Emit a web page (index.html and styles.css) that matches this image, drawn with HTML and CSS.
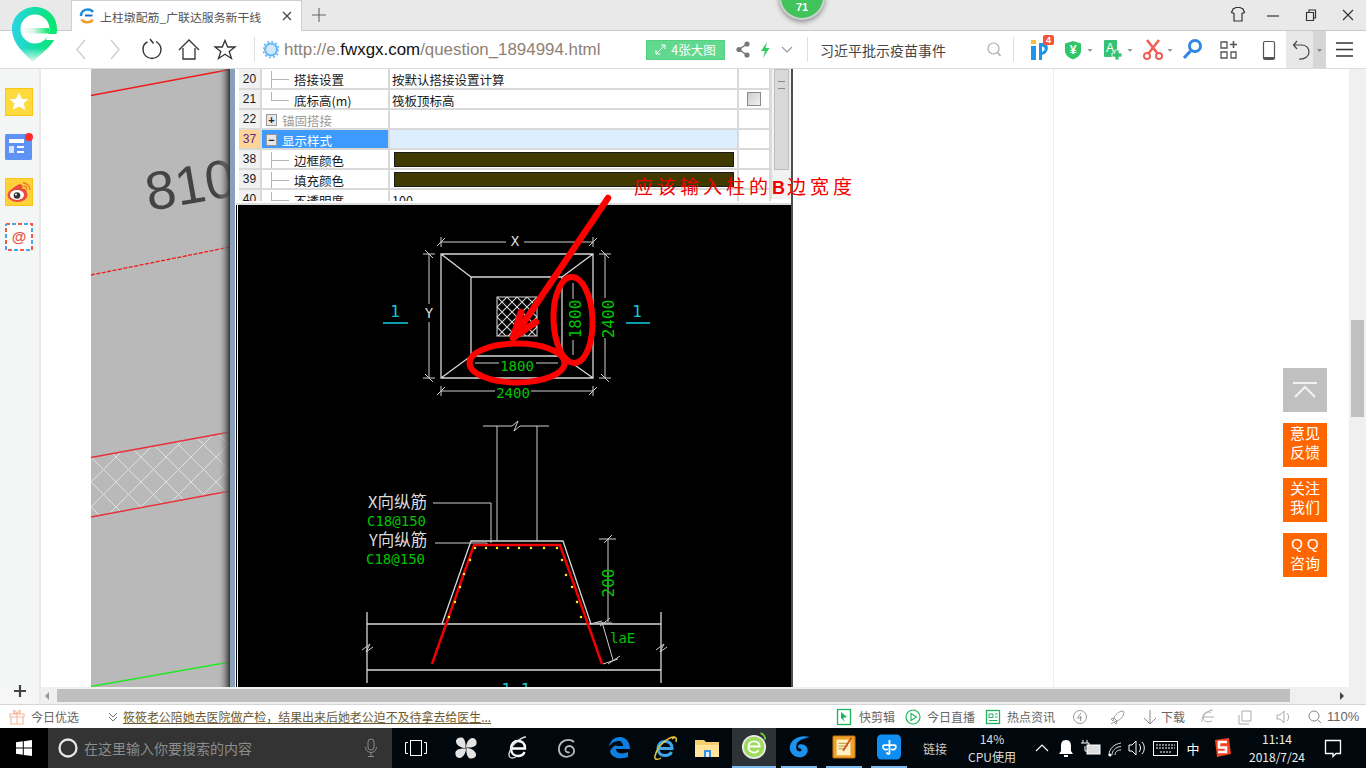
FILE: index.html
```html
<!DOCTYPE html>
<html lang="zh-CN">
<head>
<meta charset="utf-8">
<title>上柱墩配筋_广联达服务新干线</title>
<link rel="stylesheet" href="styles.css">
</head>
<body>
<div class="app">
  <svg class="logo" width="50" height="58" viewBox="0 0 50 58" aria-hidden="true">
    <defs>
      <linearGradient id="lg" x1="0" y1="0" x2="1" y2="0"><stop offset="0" stop-color="#2ad4e4"/><stop offset="0.55" stop-color="#14dfa0"/><stop offset="1" stop-color="#06e86a"/></linearGradient>
      <linearGradient id="lbar" x1="0" y1="0" x2="1" y2="0"><stop offset="0" stop-color="#ffffff"/><stop offset="0.45" stop-color="#d8f5e6"/><stop offset="1" stop-color="#06e86a"/></linearGradient>
      <linearGradient id="lfade" x1="0" y1="0" x2="0" y2="1"><stop offset="0" stop-color="#fff" stop-opacity="0"/><stop offset="1" stop-color="#fff"/></linearGradient>
    </defs>
    <path d="M25 1C38 1 47 11 47 23C47 38 34 44 23 56C16 49 2 38 2 23C2 11 12 1 25 1Z" fill="url(#lg)"/>
    <rect x="0" y="42" width="50" height="16" fill="url(#lfade)"/>
    <circle cx="25" cy="23" r="14.500" fill="#fff"/>
    <path d="M11 22H39V27.500H11Z" fill="url(#lbar)"/>
    <path d="M25 13C31 13 36 17 37.500 22H32C31 19 28 18 25 18C22 18 19 19 18 22H12.500C14 17 19 13 25 13Z" fill="#fff"/>
    <path d="M38 28H47.500L45 34L36 34Z" fill="#fff"/>
  </svg>
  <div class="score"><span class="score-num">71</span></div>

  <header class="tabstrip">
    <div class="tab">
      <svg width="16" height="16" viewBox="0 0 16 16" aria-hidden="true"><path d="M2 8C2 4 5 1.500 9 1.500C11 1.500 13 2.500 14 4" fill="none" stroke="#1f8fe0" stroke-width="2.600"/><path d="M6 7.500H13.500" stroke="#1f6fc0" stroke-width="2"/><path d="M2.500 11.500C4 14.500 10 15.500 14 12" fill="none" stroke="#f09a22" stroke-width="2.600"/></svg>
      <span class="tab-title">上柱墩配筋_广联达服务新干线</span>
      <svg class="tab-close" width="10" height="10" viewBox="0 0 10 10" aria-hidden="true"><path d="M1 1L9 9M9 1L1 9" stroke="#444" stroke-width="1.200"/></svg>
    </div>
    <svg class="tab-plus" width="14" height="14" viewBox="0 0 14 14" aria-hidden="true"><path d="M7 0V14M0 7H14" stroke="#666" stroke-width="1.100"/></svg>
    <div class="grow"></div>
    <svg width="36" height="30" viewBox="-2 0 36 30" aria-hidden="true"><path d="M13 9L16 7.500H20L23 9L24.500 12.500L22 13.500V21H14V13.500L11.500 12.500Z" fill="none" stroke="#333" stroke-width="1.200"/></svg>
    <svg width="36" height="30" viewBox="-1 0 36 30" aria-hidden="true"><path d="M12 16H24" stroke="#333" stroke-width="1.200"/></svg>
    <svg width="38" height="30" viewBox="-2 0 38 30" aria-hidden="true"><path d="M14.500 12.500H21.500V20.500H14.500ZM17 12.500V10H23.500V18H21.500" fill="none" stroke="#333" stroke-width="1.200"/></svg>
    <svg width="38" height="30" viewBox="-1 0 38 30" aria-hidden="true"><path d="M14 10L24 20M24 10L14 20" stroke="#333" stroke-width="1.200"/></svg>
  </header>

  <nav class="navbar">
    <svg width="34" height="37" viewBox="0 0 34 37" aria-hidden="true"><path d="M21 9L13 18.500L21 28" fill="none" stroke="#ccc" stroke-width="1.300"/></svg>
    <svg width="34" height="37" viewBox="0 0 34 37" aria-hidden="true"><path d="M13 9L21 18.500L13 28" fill="none" stroke="#ccc" stroke-width="1.300"/></svg>
    <svg width="40" height="37" viewBox="0 0 40 37" aria-hidden="true"><path d="M15.500 11C12 12.500 11 16 11 18.500C11 23.500 15 27.500 20 27.500C25 27.500 29 23.500 29 18.500C29 15.500 27.500 12.500 24 10.500M18 8L21.500 12.500" fill="none" stroke="#333" stroke-width="1.400"/></svg>
    <svg width="34" height="37" viewBox="0 0 34 37" aria-hidden="true"><path d="M7 19L17 9L27 19M11 17V28H23V17" fill="none" stroke="#333" stroke-width="1.300"/></svg>
    <svg width="38" height="37" viewBox="0 0 38 37" aria-hidden="true"><path d="M19 9.500L21.700 16H29L23.200 20.400L25.500 27.500L19 23.300L12.500 27.500L14.800 20.400L9 16H16.300Z" fill="none" stroke="#333" stroke-width="1.300"/></svg>
    <span class="vsep sep-url"></span>
    <svg class="url-icon" width="16" height="37" viewBox="0 0 16 37" aria-hidden="true"><circle cx="8" cy="18.500" r="6" fill="#cfe9fb" stroke="#66b7ee" stroke-width="2"/><circle cx="8" cy="18.500" r="8" fill="none" stroke="#66b7ee" stroke-width="1.500" stroke-dasharray="2 2.200"/></svg>
    <div class="url">http://e.<b class="domain">fwxgx.com</b>/question_1894994.html</div>
    <div class="bigpic">
      <svg width="11" height="11" viewBox="0 0 11 11" aria-hidden="true"><path d="M1 10L10 1M6 1H10V5M1 6V10H5" fill="none" stroke="#fff" stroke-width="1"/></svg>
      <span>4张大图</span>
    </div>
    <svg class="share" width="20" height="37" viewBox="0 0 20 37" aria-hidden="true"><path d="M14 13L6 18.500L14 24" fill="none" stroke="#777" stroke-width="1.500"/><circle cx="14" cy="13" r="2.600" fill="#777"/><circle cx="6" cy="18.500" r="2.600" fill="#777"/><circle cx="14" cy="24" r="2.600" fill="#777"/></svg>
    <svg width="24" height="37" viewBox="0 0 24 37" aria-hidden="true"><path d="M14 11L8 20H12L10 27L16.500 17H12.500Z" fill="#2ecb62"/></svg>
    <svg width="20" height="37" viewBox="0 0 20 37" aria-hidden="true"><path d="M5 16L10 21L15 16" fill="none" stroke="#999" stroke-width="1.200"/></svg>
    <span class="vsep sep-search"></span>
    <div class="searchbox">习近平批示疫苗事件</div>
    <svg width="20" height="37" viewBox="0 0 20 37" aria-hidden="true"><circle cx="9.500" cy="17.500" r="5.500" fill="none" stroke="#aaa" stroke-width="1.200"/><path d="M13.500 21.500L16.500 25" stroke="#aaa" stroke-width="1.300"/></svg>
    <span class="vsep sep-tools"></span>
    <svg class="first-tool" width="30" height="37" viewBox="0 0 30 37" aria-hidden="true"><rect x="5" y="9" width="5" height="4" fill="#f2c230"/><rect x="5" y="15" width="5" height="14" fill="#1c96e8"/><path d="M13 12H18C23 12 24 22 16 24V29H13Z" fill="#1c96e8"/><path d="M16 15.500C19 15.500 20 19.500 16 21Z" fill="#fff"/><rect x="17" y="4" width="11" height="10" rx="2" fill="#f2553d"/><text class="mini-badge" x="22.500" y="12">4</text></svg>
    <svg width="40" height="37" viewBox="0 0 40 37" aria-hidden="true"><path d="M17 10L25 12.500V20C25 24 21 27 17 28.500C13 27 9 24 9 20V12.500Z" fill="#2fc66a"/><text class="shield-text" x="17" y="23">¥</text><path d="M31.500 18H36.500L34 21Z" fill="#999"/></svg>
    <svg width="40" height="37" viewBox="0 0 40 37" aria-hidden="true"><rect x="8" y="9" width="13" height="17" rx="1" fill="#35c273"/><text class="a-text" x="14" y="21">A</text><path d="M19 19H23V22H26V26H23V29H19V26H16V22H19Z" fill="#35c273" stroke="#fff" stroke-width="0.800"/><path d="M31.500 18H36.500L34 21Z" fill="#999"/></svg>
    <svg width="40" height="37" viewBox="0 0 40 37" aria-hidden="true"><path d="M11 9L22 23M23 9L12 23" stroke="#f0605a" stroke-width="2.600"/><circle cx="11" cy="25" r="3" fill="none" stroke="#f0605a" stroke-width="2"/><circle cx="23" cy="25" r="3" fill="none" stroke="#f0605a" stroke-width="2"/><path d="M31.500 18H36.500L34 21Z" fill="#999"/></svg>
    <svg width="32" height="37" viewBox="0 0 32 37" aria-hidden="true"><circle cx="19" cy="15" r="5.500" fill="#fff" stroke="#2f86e6" stroke-width="3"/><path d="M14.500 20L8 27" stroke="#2f86e6" stroke-width="3.200"/></svg>
    <svg width="40" height="37" viewBox="0 0 40 37" aria-hidden="true"><path d="M13 11H19V17H13ZM13 21H19V27H13ZM23 21H28V27H23Z" fill="none" stroke="#555" stroke-width="1.300"/><path d="M25.500 10V17M22 13.500H29" stroke="#555" stroke-width="1.600"/></svg>
    <svg width="38" height="37" viewBox="0 0 38 37" aria-hidden="true"><rect x="15.500" y="10.500" width="11" height="18" rx="1.500" fill="none" stroke="#555" stroke-width="1.200"/><path d="M16 26H26V28H16Z" fill="#555"/></svg>
    <div class="undo">
      <svg width="27" height="37" viewBox="0 0 27 37" aria-hidden="true"><path d="M8 14H16C21 14 23 18 23 21C23 25 19 28.500 13 28M11 10L7.500 14L11 18" fill="none" stroke="#444" stroke-width="1.200"/></svg>
      <div class="undo-more"><svg width="13" height="37" viewBox="0 0 13 37" aria-hidden="true"><path d="M4 18H9L6.500 21Z" fill="#888"/></svg></div>
    </div>
    <svg width="40" height="37" viewBox="0 0 40 37" aria-hidden="true"><path d="M10 12H27M10 18.500H27M10 25H27" stroke="#333" stroke-width="1.300"/></svg>
  </nav>

  <main class="main">
    <aside class="sidebar">
      <svg width="28" height="28" viewBox="0 0 28 28" aria-hidden="true"><rect x="0.500" y="0.500" width="27" height="27" fill="#ffda3d" stroke="#fcc419"/><path d="M14 4.500L17 11H23.500L18.500 15.500L20.500 22L14 18.500L7.500 22L9.500 15.500L4.500 11H11Z" fill="#fff"/></svg>
      <svg width="28" height="28" viewBox="0 0 28 28" aria-hidden="true"><rect x="0" y="1" width="27" height="26" rx="1.500" fill="#5f92f5"/><rect x="4" y="6" width="15" height="4" fill="#fff"/><rect x="4" y="13" width="5" height="7" fill="#d7e5ff"/><path d="M12 13H19V15H12ZM12 18H19V20H12Z" fill="#fff"/><circle cx="24" cy="4" r="4" fill="#ff2a2a"/></svg>
      <svg width="28" height="28" viewBox="0 0 28 28" aria-hidden="true"><rect x="0.500" y="0.500" width="27" height="27" fill="#ffd23a" stroke="#fcc419"/><ellipse cx="12.500" cy="17" rx="10" ry="7" fill="#ea4d3d"/><path d="M6 12C10 8 15 5 17 7C18 8 17 11 17 11C20 10 22 12 22 15L14 12Z" fill="#ea4d3d"/><ellipse cx="12" cy="17" rx="7" ry="5" fill="#fff"/><circle cx="12" cy="17.500" r="3.300" fill="#333"/><circle cx="11" cy="16.500" r="1" fill="#fff"/><path d="M18 5C22 5 25 8 25 12M18.500 8C20.500 8 22 9.500 22 11.500" fill="none" stroke="#ef7b33" stroke-width="1.400"/></svg>
      <svg width="28" height="28" viewBox="0 0 28 28" aria-hidden="true"><rect x="1" y="1" width="26" height="26" fill="#fff" stroke="#ef5a4a" stroke-width="2" stroke-dasharray="4 8"/><rect x="1" y="1" width="26" height="26" fill="none" stroke="#46a6ef" stroke-width="2" stroke-dasharray="4 8" stroke-dashoffset="6"/><text class="at" x="14" y="19">@</text></svg>
      <svg class="side-add" width="12" height="12" viewBox="0 0 12 12" aria-hidden="true"><path d="M6 0V12M0 6H12" stroke="#444" stroke-width="2.200"/></svg>
    </aside>

    <section class="page">
      <div class="picture">
        <svg class="drawing" width="139" height="618" viewBox="91 69 139 618" role="img" aria-label="图纸局部">
          <defs>
            <pattern id="lattice" width="25" height="25" patternUnits="userSpaceOnUse" patternTransform="translate(91 457)"><path d="M0 0L25 25M25 0L0 25" stroke="#dfdfdf" stroke-width="1"/></pattern>
            <linearGradient id="edge" x1="0" x2="1"><stop offset="0" stop-color="#b9b9b9" stop-opacity="0"/><stop offset="1" stop-color="#333"/></linearGradient>
            <clipPath id="band"><path d="M91 457L230 432V491L91 517Z"/></clipPath>
          </defs>
          <rect x="91" y="69" width="139" height="618" fill="#b9b9b9"/>
          <rect x="91" y="432" width="139" height="85" fill="url(#lattice)" clip-path="url(#band)"/>
          <path d="M91 95.500L230 69.500" stroke="#f01a1a" stroke-width="1.500"/>
          <path d="M91 275L230 247" stroke="#f01a1a" stroke-width="1.300" stroke-dasharray="4 1.500"/>
          <path d="M91 457.500L230 432M91 517L230 491" stroke="#e8303a" stroke-width="1.400"/>
          <path d="M91 686.500L230 662" stroke="#22e822" stroke-width="1.400"/>
          <text class="dim810" transform="translate(149 211) rotate(-10)">810</text>
          <rect x="218" y="69" width="12" height="618" fill="url(#edge)"/>
        </svg>
        <div class="dialog">
          <div class="frame"></div>
          <div class="dialog-main">
            <div class="props">
              <div class="grid">
                <div class="row">
                  <div class="num">20</div>
                  <div class="name"><i class="branch"></i>搭接设置</div>
                  <div class="val">按默认搭接设置计算</div>
                  <div class="opt"></div>
                </div>
                <div class="row">
                  <div class="num">21</div>
                  <div class="name"><i class="branch branch-end"></i>底标高(m)</div>
                  <div class="val">筏板顶标高</div>
                  <div class="opt"><i class="check"></i></div>
                </div>
                <div class="row">
                  <div class="num">22</div>
                  <div class="name muted"><i class="toggle">+</i>锚固搭接</div>
                  <div class="val"></div>
                  <div class="opt"></div>
                </div>
                <div class="row row-active">
                  <div class="num">37</div>
                  <div class="name"><i class="toggle">−</i>显示样式</div>
                  <div class="val"></div>
                  <div class="opt"></div>
                </div>
                <div class="row">
                  <div class="num">38</div>
                  <div class="name"><i class="branch"></i>边框颜色</div>
                  <div class="val"><i class="swatch"></i></div>
                  <div class="opt"></div>
                </div>
                <div class="row">
                  <div class="num">39</div>
                  <div class="name"><i class="branch"></i>填充颜色</div>
                  <div class="val"><i class="swatch"></i></div>
                  <div class="opt"></div>
                </div>
                <div class="row">
                  <div class="num">40</div>
                  <div class="name"><i class="branch"></i>不透明度</div>
                  <div class="val">100</div>
                  <div class="opt"></div>
                </div>
              </div>
              <div class="tbl-scroll"><div class="tbl-thumb"><i class="grip"></i></div></div>
            </div>
            <svg class="cad" width="555" height="482" viewBox="236 205 555 482" role="img" aria-label="柱墩配筋图">
              <defs>
                <pattern id="xhatch" width="10" height="10" patternUnits="userSpaceOnUse" patternTransform="translate(497 297)"><path d="M0 0L10 10M10 0L0 10" stroke="#d8d8d8" stroke-width="1.100"/></pattern>
              </defs>
              <rect x="236" y="205" width="555" height="482" fill="#000"/>
              <rect x="237" y="205" width="1" height="482" fill="#fff"/>
              <path class="cad-line" d="M441 254H593V378H441ZM471 277H562V356H471ZM441 254L471 277M593 254L562 277M441 378L471 356M593 378L562 356"/>
              <rect x="497" y="297" width="40" height="39" fill="url(#xhatch)" stroke="#ddd"/>
              <path class="cad-thin" d="M441 242H506M524 242H593M441 237V247M593 237V247M437 246L445 238M589 246L597 238"/>
              <path class="cad-thin" d="M429 254V304M429 322V378M423 254H435M423 378H435M425 250L433 258M425 374L433 382"/>
              <path class="cad-thin" d="M605 254V298M605 338V378M599 254H611M599 378H611M601 250L609 258M601 374L609 382"/>
              <path class="cad-thin" d="M573 283V299M573 340V355M475 363H499M536 363H558"/>
              <path class="cad-thin" d="M441 391H495M531 391H593M441 386V396M593 386V396M437 395L445 387M589 395L597 387"/>
              <text class="cad-white" x="515" y="246" text-anchor="middle">X</text>
              <text class="cad-white" x="429" y="318" text-anchor="middle">Y</text>
              <text class="cad-green" x="517" y="371" text-anchor="middle">1800</text>
              <text class="cad-green" x="513" y="398" text-anchor="middle">2400</text>
              <text class="cad-green-v" transform="translate(581 319) rotate(-90)" text-anchor="middle">1800</text>
              <text class="cad-green-v" transform="translate(614 319) rotate(-90)" text-anchor="middle">2400</text>
              <text class="cad-cyan" x="395" y="317" text-anchor="middle">1</text>
              <text class="cad-cyan" x="637" y="317" text-anchor="middle">1</text>
              <path class="cad-cyan-line" d="M383 323H408M626 323H650"/>

              <path class="cad-thin" d="M483 426H512L518 421L514 431L520 426H549M497 426V541M537 426V541"/>
              <path class="cad-line" d="M442 624L471 541H563L591 624"/>
              <path class="cad-line" d="M367 624H661M367 670H661M367 612V683M661 612V683"/>
              <path class="cad-thin" d="M362 650L370 644L366 652L373 647M656 650L664 644L660 652L667 647"/>
              <path class="cad-thin" d="M433 503H491V543M435 543H487V546"/>
              <path class="rebar" d="M432 664L474 545H560L602 664"/>
              <path class="dots" d="M475 548h.01M486 548h.01M497 548h.01M508 548h.01M519 548h.01M531 548h.01M544 548h.01M557 548h.01M470 560h.01M464 574h.01M460 587h.01M455 602h.01M449 617h.01M562 560h.01M566 575h.01M572 587h.01M577 602h.01M581 617h.01"/>
              <path class="cad-thin" d="M608 539V622M599 539H616M604 543L612 535M596 623H612M600 626L610 618"/>
              <path class="cad-thin" d="M602 622L613 660M603 664L618 659M608 664L620 656M590 624L602 621"/>
              <text class="cad-cn" x="368" y="508">X向纵筋</text>
              <text class="cad-cn" x="369" y="546">Y向纵筋</text>
              <text class="cad-green" x="367" y="526">C18@150</text>
              <text class="cad-green" x="366" y="564">C18@150</text>
              <text class="cad-green-v" transform="translate(614 583) rotate(-90)" text-anchor="middle">200</text>
              <text class="cad-green" x="610" y="643">laE</text>
              <text class="cad-cyan" x="516" y="695" text-anchor="middle">1-1</text>
            </svg>
          </div>
        </div>
        <div class="note">应该输入柱的<b class="note-b">B</b>边宽度</div>
        <svg class="markup" width="380" height="230" viewBox="420 180 380 230" aria-hidden="true">
          <ellipse cx="517" cy="363" rx="47.500" ry="19.500" fill="none" stroke="#f00" stroke-width="6"/>
          <ellipse cx="573" cy="320" rx="19.500" ry="43" fill="none" stroke="#f00" stroke-width="6" transform="rotate(-2 573 320)"/>
          <path d="M608 198L516 334M513 338L521 312M513 338L536 322" fill="none" stroke="#f00" stroke-width="6.500" stroke-linecap="round"/>
        </svg>
      </div>
      <div class="sidecol"></div>
    </section>

    <div class="vscroll"><div class="vthumb"></div></div>

    <div class="floatbar">
      <div class="fb fb-top">
        <svg width="24" height="16" viewBox="0 0 24 16" aria-hidden="true"><path d="M0 1H24M2 15L12 5L22 15" fill="none" stroke="#f2f2f2" stroke-width="2"/></svg>
      </div>
      <div class="fb">意见<br>反馈</div>
      <div class="fb">关注<br>我们</div>
      <div class="fb"><span class="qq">Q Q</span><br>咨询</div>
    </div>
  </main>

  <div class="hbar">
    <div class="add"></div>
    <div class="arrow-l"></div>
    <div class="hthumb"></div>
    <div class="grow"></div>
    <div class="arrow-r"></div>
  </div>

  <div class="statusbar">
    <svg class="gift" width="18" height="18" viewBox="0 0 18 18" aria-hidden="true"><path d="M2 6H16V9H2ZM3 9H15V16H3ZM9 6V16M9 6C6 6 4.500 3 6 2.500C7.500 2 9 6 9 6C9 6 10.500 2 12 2.500C13.500 3 12 6 9 6" fill="none" stroke="#f7b79a" stroke-width="1.100"/></svg>
    <span class="st-text today">今日优选</span>
    <svg class="news-chevron" width="12" height="12" viewBox="0 0 12 12" aria-hidden="true"><path d="M2 2L6 6L10 2M2 6L6 10L10 6" fill="none" stroke="#777" stroke-width="1"/></svg>
    <a class="headline">筱筱老公陪她去医院做产检，结果出来后她老公迫不及待拿去给医生...</a>
    <div class="grow"></div>
    <div class="st-group">
      <svg width="16" height="18" viewBox="0 0 16 18" aria-hidden="true"><rect x="1.500" y="1.500" width="13" height="15" fill="none" stroke="#1cb45a" stroke-width="1.300"/><path d="M5 4L11 9L7 10L9 14L5 10Z" fill="#1cb45a"/></svg>
      <span class="st-text">快剪辑</span>
    </div>
    <div class="st-group g-tight">
      <svg width="16" height="18" viewBox="0 0 16 18" aria-hidden="true"><circle cx="8" cy="9" r="7" fill="none" stroke="#1cb45a" stroke-width="1.200"/><path d="M6 5.500L11.500 9L6 12.500Z" fill="none" stroke="#1cb45a" stroke-width="1.100"/></svg>
      <span class="st-text">今日直播</span>
    </div>
    <div class="st-group g-tight">
      <svg width="16" height="18" viewBox="0 0 16 18" aria-hidden="true"><rect x="1.500" y="2.500" width="13" height="13" fill="none" stroke="#1cb45a" stroke-width="1.300"/><path d="M4 6H8V9.500H4ZM10 6H12.500M10 9H12.500M4 12.500H12.500" fill="none" stroke="#1cb45a" stroke-width="1"/></svg>
      <span class="st-text">热点资讯</span>
    </div>
    <div class="st-tools">
      <svg width="30" height="18" viewBox="0 0 30 18" aria-hidden="true"><circle cx="15" cy="9" r="6.500" fill="none" stroke="#999"/><path d="M16 5L12.500 10H17M15.500 8V13" fill="none" stroke="#999"/></svg>
      <svg width="44" height="18" viewBox="0 0 44 18" aria-hidden="true"><path d="M28 3C24 3 20 7 19 10L22 13C25 12 29 8 29 4ZM19 10L16 11L18 13ZM22 13L21 16L19 14ZM19 14L16 16" fill="none" stroke="#999"/></svg>
      <svg width="22" height="18" viewBox="0 0 22 18" aria-hidden="true"><path d="M11 2V16M5 10L11 16L17 10" fill="none" stroke="#888"/></svg>
      <span class="st-text">下载</span>
      <svg width="46" height="18" viewBox="0 0 46 18" aria-hidden="true"><path d="M29 9H18C18 13 22 15 27 13M18 9C18 5 22 3 26 4.500M28 2C23 2 16 8 17 14" fill="none" stroke="#aaa"/></svg>
      <svg width="28" height="18" viewBox="0 0 28 18" aria-hidden="true"><path d="M11 3H20V13H11ZM8 7V16H18" fill="none" stroke="#aaa"/></svg>
      <svg width="48" height="18" viewBox="0 0 48 18" aria-hidden="true"><path d="M18 7H21L25 3V15L21 11H18ZM28 5C30 7 30 11 28 13" fill="none" stroke="#aaa"/></svg>
      <svg width="16" height="18" viewBox="0 0 16 18" aria-hidden="true"><circle cx="7" cy="8" r="5" fill="none" stroke="#888"/><path d="M10.500 11.500L14 15" stroke="#888"/></svg>
      <span class="st-text zoomlevel">110%</span>
    </div>
  </div>

  <footer class="taskbar">
    <div class="start"><svg width="16" height="16" viewBox="0 0 16 16" aria-hidden="true"><path d="M0 2.300L6.800 1.300V7.600H0ZM7.800 1.200L16 0V7.600H7.800ZM0 8.500H6.800V14.800L0 13.800ZM7.800 8.500H16V16L7.800 14.900Z" fill="#fff"/></svg></div>
    <div class="cortana">
      <svg width="20" height="20" viewBox="0 0 20 20" aria-hidden="true"><circle cx="10" cy="10" r="8.500" fill="none" stroke="#e6e6e6" stroke-width="2.300"/></svg>
      <span class="cortana-text">在这里输入你要搜索的内容</span>
      <div class="grow"></div>
      <svg class="mic" width="14" height="20" viewBox="0 0 14 20" aria-hidden="true"><rect x="4" y="1" width="6" height="11" rx="3" fill="none" stroke="#888"/><path d="M1.500 9C1.500 12 4 14.500 7 14.500C10 14.500 12.500 12 12.500 9M7 14.500V18M4 18.500H10" fill="none" stroke="#888"/></svg>
    </div>
    <div class="tb-slot s48"><svg width="22" height="16" viewBox="0 0 22 16" aria-hidden="true"><rect x="5.500" y="0.500" width="11" height="15" fill="none" stroke="#fff"/><path d="M3 2.500H0.500V13.500H3M19 2.500H21.500V13.500H19" fill="none" stroke="#fff"/></svg></div>
    <div class="tb-slot s52"><svg width="22" height="22" viewBox="0 0 22 22" aria-hidden="true"><path d="M10.500 11C7 11 2 9 1 5C0.500 1 5 0 7 0.500C10 1.500 11 7 10.500 11ZM11 10.500C11 7 13 2 17 1C21 0.500 22 5 21.500 7C20.500 10 15 11 11 10.500ZM11.500 11C15 11 20 13 21 17C21.500 21 17 22 15 21.500C12 20.500 11 15 11.500 11ZM11 11.500C11 15 9 20 5 21C1 21.500 0 17 0.500 15C1.500 12 7 11 11 11.500Z" fill="#e4e4e4"/></svg></div>
    <div class="tb-slot s52"><svg width="22" height="24" viewBox="0 0 22 24" aria-hidden="true"><path d="M4 12.500H18C18 7 15 5 11 5C7 5 4 8 4 12.500C4 17 7 20 11 20C14 20 16.500 18.500 17.500 16" fill="none" stroke="#fff" stroke-width="2.400"/><path d="M19 1C15 1 4 8 2 18C1.500 22 5 23 9 21" fill="none" stroke="#ddd" stroke-width="1.300"/></svg></div>
    <div class="tb-slot s46"><svg width="20" height="20" viewBox="0 0 20 20" aria-hidden="true"><path d="M17 4C14 1 8 1 4.500 4.500C1 8 1 14 4.500 17C8 20 14 19 16.500 15.500C18 12 16 8 12.500 8C9.500 8 8 10 8.500 12.500C9 14 11 15 12.500 14" fill="none" stroke="#bbb" stroke-width="1.800"/></svg></div>
    <div class="tb-slot s58"><svg width="22" height="22" viewBox="0 0 22 22" aria-hidden="true"><path d="M1 10C2 4 6 0 12 0C18 0 22 5 22 12H8C8 16 13 18 20 15V20C12 23 3 21 2 14C4 10 7 8 9 8C8 9 8 9 8 9H15C15 6 13 4 11 4C7 4 3 6 1 10Z" fill="#0c7fe0"/></svg></div>
    <div class="tb-slot s34"><svg width="26" height="26" viewBox="0 0 26 26" aria-hidden="true"><path d="M6 13.500H20C20 8.500 17 6.500 13 6.500C9 6.500 6 9 6 13.500C6 18 9 20.500 13 20.500C16 20.500 18.500 19 19.500 17" fill="none" stroke="#3ea7ee" stroke-width="3"/><path d="M23 2C18 1 6 9 3 21C2 25 6 25 9 23M20 4C24 1 25 3 24 7" fill="none" stroke="#e8c23a" stroke-width="1.500"/></svg></div>
    <div class="tb-slot s50"><svg width="26" height="22" viewBox="0 0 26 22" aria-hidden="true"><path d="M1 3H10L12 5H25V20H1Z" fill="#f5cf6e"/><path d="M1 8H25V20H1Z" fill="#ffe49a"/><rect x="10" y="13" width="7" height="7" fill="#3d8fd8"/><rect x="12" y="15" width="3" height="5" fill="#d7ecff"/></svg></div>
    <div class="tb-slot s44 active"><svg width="26" height="30" viewBox="0 0 28 32" aria-hidden="true"><circle cx="14" cy="16" r="12" fill="#9ddc5a" stroke="#e8e8e8" stroke-width="2"/><path d="M8 15.500H20C20 11 17 10 14 10C10 10 8 12.500 8 16C8 20 11 22 14 22C16.500 22 18 21 19 19.500" fill="none" stroke="#fff" stroke-width="2"/><path d="M21 1C24 2 26 5 26 8" fill="none" stroke="#6ccb3e" stroke-width="2"/></svg></div>
    <div class="tb-slot run r1"><svg width="24" height="26" viewBox="0 0 26 28" aria-hidden="true"><path d="M24 3C14 0 2 6 3 16C4 24 14 28 20 23C25 18 22 11 15 11C12 11 11 14 13 15C16 16 17 18 14 19C10 19 9 14 11 10C13 6 20 5 24 3Z" fill="#1a93ee"/></svg></div>
    <div class="tb-slot run r2"><svg width="24" height="26" viewBox="0 0 26 28" aria-hidden="true"><rect x="1" y="2" width="24" height="24" rx="1" fill="#f0a128" stroke="#b86a10"/><rect x="5" y="6" width="15" height="17" fill="#fff2c4"/><path d="M7 10H17M7 13H17M7 16H14" stroke="#b8892e"/><path d="M21 4L12 18" stroke="#d4531d" stroke-width="2"/></svg></div>
    <div class="tb-slot run r3"><svg width="24" height="26" viewBox="0 0 27 28" aria-hidden="true"><rect width="27" height="28" rx="5" fill="#0f8df0"/><path d="M14 6V22M7 12H21M7 12C6 17 10 18 12 16M21 12C22 17 18 18 16 16M14 22C12 22 11 21 11 20" fill="none" stroke="#fff" stroke-width="2"/></svg></div>
    <span class="tb-link">链接</span>
    <div class="cpu"><span>14%</span><span>CPU使用</span></div>
    <div class="tray">
      <svg class="t24" width="24" height="40" viewBox="0 0 24 40" aria-hidden="true"><path d="M6 23L12 17L18 23" fill="none" stroke="#fff" stroke-width="1.200"/></svg>
      <svg width="24" height="40" viewBox="0 0 24 40" aria-hidden="true"><path d="M12 12C8 12 7 15 7 18V23L5 26H19L17 23V18C17 15 16 12 12 12ZM10 27H14V29H10Z" fill="#fff"/></svg>
      <svg width="24" height="40" viewBox="0 0 24 40" aria-hidden="true"><path d="M5 12V15M9 12V15M3 15H11V18M7 18V23H9" fill="none" stroke="#fff"/><rect x="9" y="17" width="13" height="9" fill="#ddd" stroke="#fff"/></svg>
      <svg width="25" height="40" viewBox="0 0 25 40" aria-hidden="true"><path d="M7 27C7 21 12 16 19 15M10 27C10 23 13 19 19 18.500M13 27C13 24 15 22 19 22" fill="none" stroke="#ddd"/><circle cx="8" cy="27" r="1.500" fill="#fff"/></svg>
      <svg width="21" height="40" viewBox="0 0 21 40" aria-hidden="true"><path d="M2 17H5L9 13V27L5 23H2ZM12 16C14 18 14 22 12 24M15 14C18 17 18 23 15 26" fill="none" stroke="#fff"/></svg>
      <svg width="34" height="40" viewBox="0 0 34 40" aria-hidden="true"><rect x="5.500" y="13.500" width="24" height="14" fill="none" stroke="#fff"/><path d="M8 17H27M8 20H27M12 24H23" stroke="#fff" stroke-dasharray="2 1"/></svg>
      <span class="tray-zh">中</span>
      <svg width="36" height="40" viewBox="0 0 36 40" aria-hidden="true"><path d="M11 12L25 10L27 26L13 29Z" fill="#f4421f"/><path d="M23 14H15V19.500H22V24H14" fill="none" stroke="#fff" stroke-width="2.600"/></svg>
      <div class="clock"><span>11:14</span><span>2018/7/24</span></div>
      <svg width="38" height="40" viewBox="0 0 38 40" aria-hidden="true"><path d="M11.500 12.500H26.500V25.500H22L19 28.500V25.500H11.500Z" fill="none" stroke="#fff" stroke-width="1.300"/></svg>
    </div>
  </footer>
</div>
</body>
</html>
```
FILE: styles.css
```css
* { box-sizing: border-box; }
html, body { margin: 0; padding: 0; }
body {
  width: 1366px;
  height: 768px;
  overflow: hidden;
  font-family: "Noto Sans CJK SC", "Liberation Sans", sans-serif;
  background: #fff;
}
svg { display: block; flex: none; }
i { font-style: normal; }
.app {
  position: relative;
  width: 1366px;
  height: 768px;
  display: flex;
  flex-direction: column;
  overflow: hidden;
}
.grow { flex: 1; }

/* overlays on the browser chrome */
.logo { position: absolute; left: 10px; top: 6px; z-index: 5; }
.score {
  position: absolute;
  left: 779px;
  top: -26px;
  width: 46px;
  height: 46px;
  border-radius: 50%;
  background: #41c35c;
  border: 2px solid #c9d3cb;
  box-shadow: 0 2px 5px rgba(0, 0, 0, .4);
  z-index: 5;
  display: flex;
  align-items: flex-end;
  justify-content: center;
  padding-bottom: 5px;
}
.score-num { color: #fff; font: bold 11px/12px "Liberation Sans", sans-serif; }

/* tab strip */
.tabstrip {
  height: 31px;
  flex: none;
  display: flex;
  align-items: flex-start;
  padding-left: 71px;
  background: #e9e9e9;
  border-bottom: 1px solid #c9c9c9;
}
.tab {
  width: 231px;
  height: 31px;
  background: #fff;
  border: 1px solid #cfcfcf;
  border-bottom: 0;
  display: flex;
  align-items: center;
  padding-left: 7px;
}
.tab-title { margin-left: 5px; font-size: 11.900px; color: #555; white-space: nowrap; width: 173px; }
.tab-close { margin-left: 9px; }
.tab-plus { margin: 8px 0 0 10px; }

/* navigation bar */
.navbar {
  height: 38px;
  flex: none;
  display: flex;
  align-items: center;
  padding-left: 64px;
  background: #fff;
  border-bottom: 1px solid #dcdcdc;
}
.vsep { width: 1px; height: 25px; background: #dedede; flex: none; }
.sep-url { margin-left: 10px; }
.url-icon { margin-left: 8px; }
.url {
  margin-left: 5px;
  width: 362px;
  flex: none;
  font: 16.900px/20px "Liberation Sans", sans-serif;
  color: #8f7f76;
  white-space: nowrap;
}
.domain { font-weight: 400; color: #111; }
.bigpic {
  width: 79px;
  height: 20px;
  flex: none;
  background: #62d98f;
  border: 1px solid #52cf80;
  display: flex;
  align-items: center;
  justify-content: center;
  gap: 5px;
  color: #fff;
  font-size: 12.500px;
  line-height: 18px;
}
.share { margin-left: 8px; }
.sep-search { margin-left: 10px; }
.searchbox { margin-left: 12px; width: 164px; flex: none; font-size: 14px; line-height: 20px; color: #444; white-space: nowrap; }
.sep-tools { margin-left: 9px; }
.first-tool { margin-left: 12px; }
.mini-badge { fill: #fff; font: bold 9px "Liberation Sans", sans-serif; text-anchor: middle; }
.shield-text { fill: #fff; font: bold 12px "Liberation Sans", sans-serif; text-anchor: middle; }
.a-text { fill: #fff; font: 12px "Liberation Sans", sans-serif; text-anchor: middle; }
.undo { width: 40px; height: 37px; flex: none; display: flex; background: #e8e8e8; }
.undo-more { width: 13px; background: #d6d6d6; }

/* main area */
.main { position: relative; height: 618px; flex: none; display: flex; background: #fff; }
.sidebar {
  width: 41px;
  flex: none;
  display: flex;
  flex-direction: column;
  gap: 17px;
  padding: 19px 0 0 5px;
  background: #f3f6f5;
  border-right: 2px solid #e8e8e8;
}
.side-add { margin: auto 0 -10px 9px; }
.at { fill: #e8523f; font: bold 15px "Liberation Sans", sans-serif; text-anchor: middle; }
.page { flex: 1; display: flex; padding-left: 50px; overflow: hidden; }
.picture { position: relative; width: 702px; flex: none; display: flex; height: 618px; }
.sidecol { margin-left: 260px; flex: 1; border-left: 1px solid #eee; }
.drawing { width: 139px; }
.dim810 { fill: #444; font: 54px "Liberation Sans", sans-serif; }

.dialog { width: 563px; flex: none; display: flex; background: #fff; border-right: 2px solid #4d4d4d; }
.frame {
  width: 6px;
  flex: none;
  background: linear-gradient(90deg, #8a9fb8 0, #8a9fb8 5px, #fff 5px);
}
.dialog-main { width: 555px; flex: none; display: flex; flex-direction: column; }
.props { height: 136px; flex: none; display: flex; overflow: hidden; background: #fff; padding-left: 3px; border-bottom: 2px solid #dcdcdc; }
.grid { width: 532px; flex: none; height: 132px; overflow: hidden; }
.row {
  height: 20px;
  display: grid;
  grid-template-columns: 23px 128px 349px 32px;
  border-bottom: 2px solid #d9d9d9;
  font-size: 12.500px;
  line-height: 17px;
  color: #1a1a1a;
  white-space: nowrap;
}
.row:first-child { height: 21px; }
.row > div { border-right: 2px solid #d9d9d9; display: flex; align-items: center; overflow: hidden; }
.num { background: #f1f1f1; justify-content: center; font: 12px "Liberation Sans", sans-serif; }
.name { padding-left: 9px; padding-top: 2px; }
.val { padding-left: 2px; padding-top: 2px; }
.opt { justify-content: center; }
.row > .muted { color: #9a9a9a; padding-left: 4px; }
.branch {
  width: 18px;
  flex: none;
  align-self: stretch;
  margin-right: 5px;
  background:
    linear-gradient(#b5b5b5, #b5b5b5) 0 0 / 1px 100% no-repeat,
    linear-gradient(#b5b5b5, #b5b5b5) 0 8px / 100% 1px no-repeat;
}
.branch-end { background-size: 1px 9px, 100% 1px; }
.toggle {
  width: 11px;
  height: 12px;
  flex: none;
  margin-right: 5px;
  background: #e8e8e8;
  border: 1px solid #999;
  color: #222;
  font: bold 11px/10px "Liberation Sans", sans-serif;
  text-align: center;
}
.check { width: 14px; height: 14px; background: linear-gradient(135deg, #ccc, #f2f2f2); border: 1px solid #8a8a8a; }
.swatch { width: 340px; height: 15px; background: #403a00; border: 1px solid #1c1c1c; margin: -1px 0 0 2px; }
.row-active .num { background: #ffd494; color: #5a2a8a; }
.row-active .name { background: #3d9bff; color: #fff; padding-left: 4px; }
.row-active .val { background: #ddeeff; }
.tbl-scroll { width: 20px; flex: none; background: #f2f2f2; border-left: 1px solid #ddd; height: 130px; padding: 0 2px; }
.tbl-thumb { height: 101px; background: #d8d8d8; border: 1px solid #bdbdbd; padding-top: 11px; display: flex; justify-content: center; }
.grip { width: 7px; height: 8px; border-top: 1px solid #888; border-bottom: 1px solid #888; }
.cad { width: 555px; height: 482px; }
.cad-line { fill: none; stroke: #d8d8d8; stroke-width: 1.300; }
.cad-thin { fill: none; stroke: #cfcfcf; stroke-width: 1; }
.cad-cyan-line { fill: none; stroke: #10d0e0; stroke-width: 1.600; }
.rebar { fill: none; stroke: #f00000; stroke-width: 2.500; }
.dots { fill: none; stroke: #ffee22; stroke-width: 2.500; stroke-linecap: round; }
.cad-green { fill: #00c400; font: 14px "DejaVu Sans Mono", monospace; }
.cad-green-v { fill: #00c400; font: 16px "DejaVu Sans Mono", monospace; }
.cad-white { fill: #ddd; font: 14px "DejaVu Sans Mono", monospace; }
.cad-cyan { fill: #10c8dc; font: 16px "DejaVu Sans Mono", monospace; }
.cad-cn { fill: #ddd; font: 16.500px "Noto Sans CJK SC", sans-serif; }

/* annotation on the picture */
.note {
  position: absolute;
  left: 543px;
  top: 105px;
  color: #f00000;
  font-size: 19px;
  line-height: 24px;
  letter-spacing: 4px;
  white-space: nowrap;
  z-index: 3;
}
.note-b { font: bold 18px "Liberation Sans", sans-serif; letter-spacing: 2px; }
.markup { position: absolute; left: 329px; top: 111px; z-index: 2; }

/* vertical page scrollbar */
.vscroll { width: 17px; flex: none; background: #f0f0f0; padding: 251px 2px 0; }
.vthumb { height: 97px; background: #c0c0c0; }

/* floating shortcuts */
.floatbar {
  position: absolute;
  left: 1283px;
  top: 299px;
  display: flex;
  flex-direction: column;
  gap: 11px;
  z-index: 4;
}
.fb {
  width: 44px;
  height: 44px;
  background: #ff6600;
  color: #fff;
  font-size: 15px;
  line-height: 19px;
  text-align: center;
}
.qq { font-family: "Liberation Sans", sans-serif; }
.fb-top { background: #c0c0c0; padding-top: 14px; display: flex; justify-content: center; }

/* horizontal scrollbar */
.hbar { height: 18px; flex: none; display: flex; background: #f0f0f0; border-bottom: 1px solid #d5d5d5; }
.add { width: 41px; background: #f5f6f5; border-right: 2px solid #e8e8e8; }
.arrow-l { width: 16px; display: flex; align-items: center; justify-content: center; }
.arrow-l::before { content: ""; border: 4px solid transparent; border-left: 0; border-right: 4px solid #999; margin-right: 4px; }
.hthumb { width: 1233px; margin: 2px 0; background: #bfbfbf; }
.arrow-r { width: 34px; flex: none; display: flex; align-items: center; padding-left: 8px; }
.arrow-r::before { content: ""; border: 4px solid transparent; border-right: 0; border-left: 4px solid #444; }

/* status bar */
.statusbar { height: 23px; flex: none; display: flex; align-items: center; background: #fff; padding-left: 8px; }
.st-text { font-size: 12px; line-height: 18px; color: #666; white-space: nowrap; flex: none; }
.today { margin-left: 5px; }
.news-chevron { margin-left: 28px; }
.headline { margin-left: 4px; font-size: 11.950px; line-height: 18px; color: #6b5a32; text-decoration: underline; white-space: nowrap; }
.st-group { display: flex; align-items: center; gap: 7px; margin-right: 10px; flex: none; }
.g-tight { gap: 6px; }
.st-tools { display: flex; align-items: center; flex: none; width: 301px; }
.zoomlevel { margin-left: 4px; font-family: "Liberation Sans", sans-serif; font-size: 13px; }

/* taskbar */
.taskbar { height: 40px; flex: none; display: flex; align-items: center; background: #01080d; color: #fff; }
.start { width: 48px; height: 40px; flex: none; background: #000; display: flex; align-items: center; justify-content: center; }
.cortana { width: 344px; height: 40px; flex: none; background: #333; display: flex; align-items: center; padding: 0 14px 0 10px; }
.cortana-text { margin-left: 6px; font-size: 14px; line-height: 20px; color: #8c8c8c; white-space: nowrap; }
.tb-slot { height: 40px; flex: none; display: flex; align-items: center; justify-content: center; }
.s48 { width: 48px; }
.s52 { width: 52px; }
.s46 { width: 46px; }
.s58 { width: 58px; }
.s34 { width: 34px; }
.s50 { width: 50px; }
.s44 { width: 44px; }
.active { background: #2c3236; border-bottom: 2px solid #7cb9ee; }
.run { width: 36px; border-bottom: 2px solid #7cb9ee; }
.r1 { margin-left: 5px; }
.r2 { margin-left: 9px; }
.r3 { margin-left: 9px; }
.tb-link { margin-left: 16px; font-size: 12px; color: #ccc; white-space: nowrap; flex: none; }
.cpu { margin-left: 21px; width: 48px; flex: none; display: flex; flex-direction: column; align-items: center; font-size: 12px; line-height: 18px; color: #ddd; white-space: nowrap; }
.tray { margin-left: 14px; flex: none; display: flex; align-items: center; }
.tray-zh { width: 22px; flex: none; text-align: center; font-size: 13px; color: #fff; }
.clock { width: 74px; flex: none; display: flex; flex-direction: column; align-items: center; font-size: 12px; line-height: 18px; color: #eee; }
```
